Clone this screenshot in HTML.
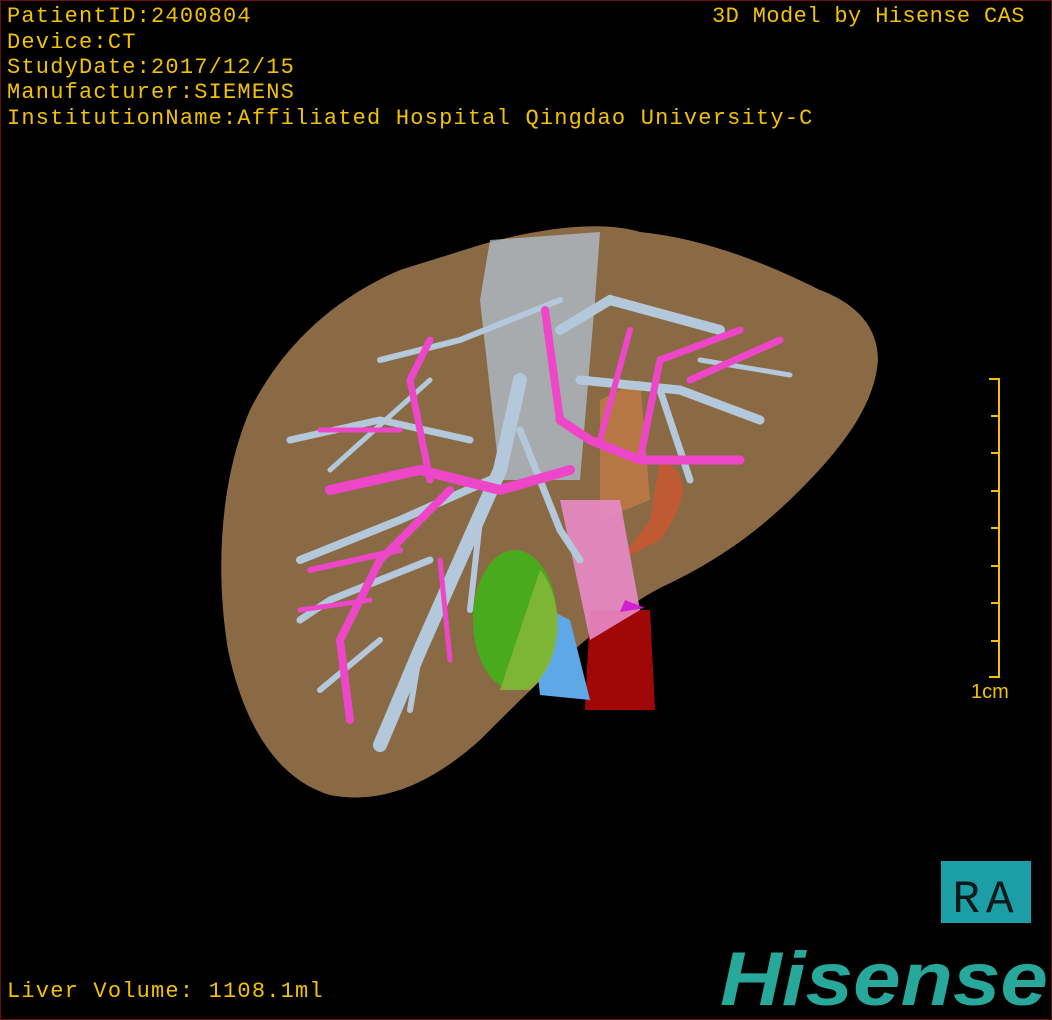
<!DOCTYPE html>
<html><head><meta charset="utf-8"><style>
html,body{margin:0;padding:0;background:#000;}
#s{position:relative;width:1050px;height:1018px;border:1px solid #6b1010;background:#000;overflow:hidden;font-family:"Liberation Mono","DejaVu Sans Mono",monospace;}
.t{position:absolute;left:6px;color:#f2c200;font-size:22px;letter-spacing:1.2px;white-space:nowrap;line-height:25px;}
</style></head><body><div id="s">
<div class="t" style="top:3px">PatientID:2400804</div>
<div class="t" style="top:29px">Device:CT</div>
<div class="t" style="top:54px">StudyDate:2017/12/15</div>
<div class="t" style="top:79px">Manufacturer:SIEMENS</div>
<div class="t" style="top:105px">InstitutionName:Affiliated Hospital Qingdao University-C</div>
<div class="t" style="top:3px;left:711px;letter-spacing:0.4px">3D Model by Hisense CAS</div>
<div class="t" style="top:978px">Liver Volume: 1108.1ml</div>
<svg width="1052" height="1020" style="position:absolute;left:-1px;top:-1px">
<path d="M480 245 C540 228 600 220 640 232 C700 238 760 260 820 290 C860 305 878 330 878 360 C875 400 850 440 800 490 C760 530 720 560 660 588 C600 620 540 680 480 740 C430 785 380 805 330 795 C280 780 245 730 228 650 C215 570 220 480 250 410 C280 350 330 300 400 270 Z" fill="#8a6a45"/>
<path d="M600 400 L640 380 L650 500 L600 520 Z" fill="#c07a45" opacity="0.8"/>
<path d="M660 460 C690 470 690 500 660 540 L620 560 L650 520 Z" fill="#c05a35"/>
<path d="M490 240 L600 232 L595 300 L580 480 L500 480 L480 300 Z" fill="#b4c8dc" opacity="0.7"/>
<path d="M590 610 L650 610 L655 710 L585 710 Z" fill="#a00808"/>
<path d="M530 600 L570 620 L590 700 L540 695 Z" fill="#5fa8e8"/>
<path d="M560 500 L620 500 L640 610 L590 640 Z" fill="#e88ac8" opacity="0.9"/>
<ellipse cx="515" cy="620" rx="42" ry="70" fill="#4aaa1e"/>
<path d="M540 570 C565 600 565 660 530 690 L500 690 Z" fill="#8ab83a" opacity="0.8"/>
<g stroke="#b4c8dc" stroke-linecap="round" fill="none">
<path d="M520 380 L500 470 L460 560 L420 650 L380 745" stroke-width="14"/>
<path d="M490 480 L400 520 L300 560" stroke-width="8"/>
<path d="M470 440 L380 420 L290 440" stroke-width="7"/>
<path d="M430 560 L330 600 L300 620" stroke-width="7"/>
<path d="M480 520 L470 610" stroke-width="6"/>
<path d="M380 640 L320 690" stroke-width="6"/>
<path d="M420 650 L410 710" stroke-width="6"/>
<path d="M560 330 L610 300 L720 330" stroke-width="10"/>
<path d="M580 380 L680 390 L760 420" stroke-width="9"/>
<path d="M660 390 L690 480" stroke-width="7"/>
<path d="M520 430 L560 530 L580 560" stroke-width="7"/>
<path d="M560 300 L460 340 L380 360" stroke-width="6"/>
<path d="M700 360 L790 375" stroke-width="5"/>
<path d="M430 380 L330 470" stroke-width="5"/>
</g>
<g stroke="#ee46c8" stroke-linecap="round" fill="none">
<path d="M560 420 L590 440 L640 460 L740 460" stroke-width="9"/>
<path d="M560 420 L545 310" stroke-width="8"/>
<path d="M640 460 L660 360 L740 330" stroke-width="7"/>
<path d="M690 380 L780 340" stroke-width="7"/>
<path d="M600 440 L630 330" stroke-width="6"/>
<path d="M570 470 L500 490 L420 470 L330 490" stroke-width="10"/>
<path d="M430 480 L410 380 L430 340" stroke-width="7"/>
<path d="M450 490 L380 560 L340 640 L350 720" stroke-width="8"/>
<path d="M400 550 L310 570" stroke-width="6"/>
<path d="M370 600 L300 610" stroke-width="5"/>
<path d="M440 560 L450 660" stroke-width="5"/>
<path d="M400 430 L320 430" stroke-width="5"/>
</g>
<path d="M625 600 L645 608 L620 612 Z" fill="#d020d0"/>
<g stroke="#f2c200" stroke-width="2" fill="none">
<path d="M999 378 V678"/>
<path d="M989 379 H999 M991 416 H999 M991 453 H999 M991 491 H999 M991 528 H999 M991 566 H999 M991 603 H999 M991 641 H999 M989 677 H999"/>
</g>
<text x="971" y="698" fill="#f2c200" font-family="Liberation Sans,sans-serif" font-size="20">1cm</text>
<rect x="941" y="861" width="90" height="62" fill="#1c9ea6"/>
<text x="986" y="912" text-anchor="middle" fill="#0a1a1a" font-family="Liberation Mono,monospace" font-size="46" letter-spacing="6">RA</text>
<text x="720" y="1005" fill="#27a89a" font-family="Liberation Sans,sans-serif" font-weight="bold" font-style="italic" font-size="76" textLength="328" lengthAdjust="spacingAndGlyphs">Hisense</text>
</svg>
</div></body></html>
